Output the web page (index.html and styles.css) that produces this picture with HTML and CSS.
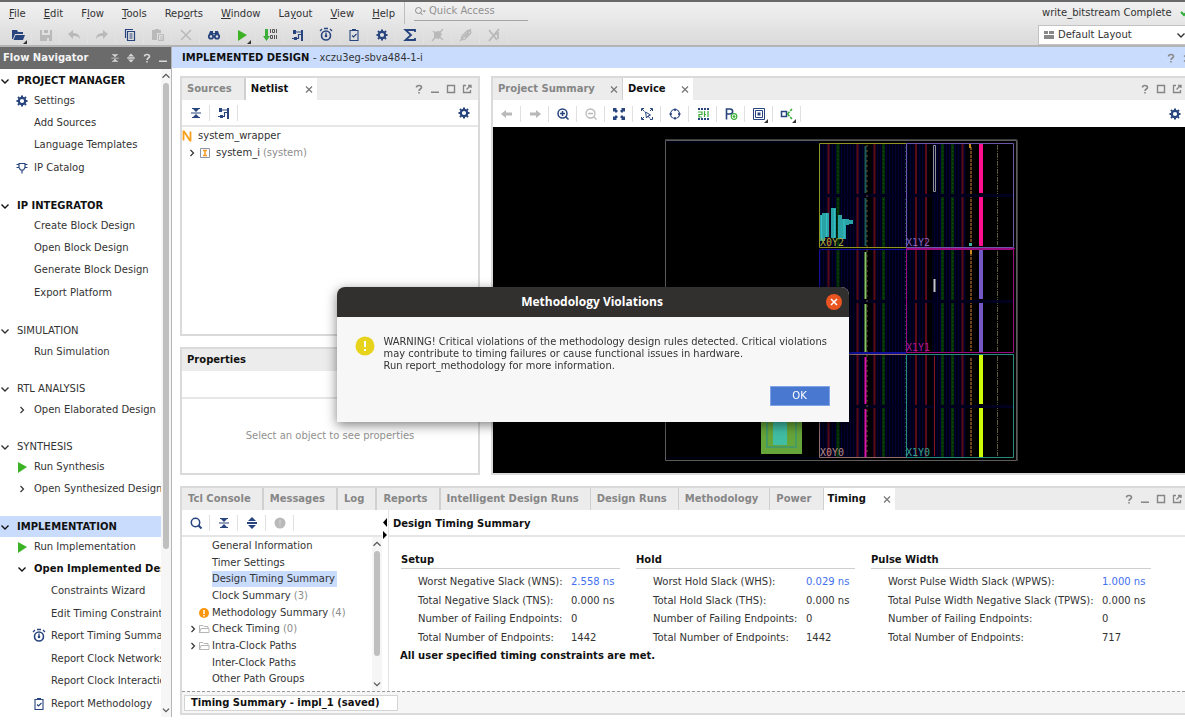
FILE: index.html
```
<!DOCTYPE html>
<html lang="en">
  <head>
    <meta charset="utf-8">
    <title>Implemented Design</title>
    <link rel="stylesheet" href="styles.css">
  </head>
  <body>
    <!-- icon set -->
    <svg class="sprite" aria-hidden="true">
      <symbol id="i-open" viewBox="0 0 16 16"><path fill="currentColor" d="M2 3h5l1 2h5v2H5l-2 5H2zM5.500 8H15l-2 5H3.500z"/></symbol>
      <symbol id="i-save" viewBox="0 0 16 16"><path fill="currentColor" d="M2 3h2v5h8V3h2v11h-3v-3H9v3H2zM6 3h4v3H6z"/></symbol>
      <symbol id="i-undo" viewBox="0 0 16 16"><path fill="currentColor" d="M2 7l5-4v3c4 0 7 2 7 6-2-3-4-3-7-3v3z"/></symbol>
      <symbol id="i-redo" viewBox="0 0 16 16"><path fill="currentColor" d="M14 7L9 3v3c-4 0-7 2-7 6 2-3 4-3 7-3v3z"/></symbol>
      <symbol id="i-copy" viewBox="0 0 16 16"><path fill="none" stroke="currentColor" stroke-width="1.200" d="M5.500 4.500h7v9h-7zM3.500 11V2.500H11M7.500 7h3M7.500 9h3M7.500 11h3"/></symbol>
      <symbol id="i-paste" viewBox="0 0 16 16"><path fill="currentColor" d="M2 3h3V2h4v1h2v3H7v7H2z"/><path fill="none" stroke="currentColor" d="M8.500 7.500h5v6h-5zM10 10h3M10 12h3"/></symbol>
      <symbol id="i-cross" viewBox="0 0 16 16"><path fill="none" stroke="currentColor" stroke-width="1.500" d="M3 3l10 10M13 3L3 13"/></symbol>
      <symbol id="i-find" viewBox="0 0 16 16"><path fill="currentColor" d="M4 4h3v2h2V4h3l1 3H3z"/><circle cx="5" cy="9.500" r="2.200" fill="none" stroke="currentColor" stroke-width="1.800"/><circle cx="11" cy="9.500" r="2.200" fill="none" stroke="currentColor" stroke-width="1.800"/></symbol>
      <symbol id="i-play" viewBox="0 0 16 16"><path fill="#3cb324" d="M4 3l9 5-9 6z"/></symbol>
      <symbol id="i-bits" viewBox="0 0 16 16"><path fill="#3cae3a" d="M3 2h3v7h2l-3.500 5L1 9h2z"/><path fill="none" stroke="#555" d="M8.500 2v4M10.500 2.500h2v3h-2zM14.500 2v4M8.500 8.500h2v3h-2zM12.500 8v4M14.500 8v4"/></symbol>
      <symbol id="i-net" viewBox="0 0 16 16"><path fill="currentColor" d="M3 3h3v4H3zM4 10h3v3H4zM11 3h2v11h-2z"/><path fill="none" stroke="currentColor" stroke-width="1.200" d="M2 11.500h3M6 5h6M6 11.500h2.500v-4H11"/></symbol>
      <symbol id="i-clock" viewBox="0 0 16 16"><circle cx="8" cy="8.500" r="4.500" fill="none" stroke="currentColor" stroke-width="1.600"/><path fill="none" stroke="currentColor" stroke-width="1.300" d="M8 5.500v3M6 1.500h4M2 4l2-2M14 4l-2-2"/><circle cx="8" cy="9" r="1.300" fill="currentColor"/></symbol>
      <symbol id="i-clip" viewBox="0 0 16 16"><path fill="none" stroke="currentColor" stroke-width="1.100" d="M4 3.500h8v10H4zM6 8.500l1.500 1.500L10.500 7"/><path fill="currentColor" d="M6 2h4v2H6z"/></symbol>
      <symbol id="i-gear" viewBox="0 0 16 16"><circle cx="8" cy="8" r="3.200" fill="none" stroke="currentColor" stroke-width="2.200"/><path stroke="currentColor" stroke-width="2" d="M8 2.500v2M8 11.500v2M2.500 8h2M11.500 8h2M4 4l1.200 1.200M10.800 10.800L12 12M12 4l-1.200 1.200M5.200 10.800L4 12"/></symbol>
      <symbol id="i-sigma" viewBox="0 0 16 16"><path fill="none" stroke="currentColor" stroke-width="1.800" d="M13 5V3H3.500L9 8l-5.500 5H13v-2"/></symbol>
      <symbol id="i-off1" viewBox="0 0 16 16"><path fill="currentColor" d="M4 5l5-1 3 3-3 5-5-1z"/><path stroke="currentColor" stroke-width="1.300" d="M2 14L13 2M3 4l10 9"/></symbol>
      <symbol id="i-off2" viewBox="0 0 16 16"><path fill="none" stroke="currentColor" stroke-width="1.400" d="M4 9l5-5c3-2 5 1 3 3l-5 5c-3 2-4-1-3-3zM2 14L13 2M7 10l4-4"/></symbol>
      <symbol id="i-off3" viewBox="0 0 16 16"><path fill="none" stroke="currentColor" stroke-width="1.800" d="M3 3l8 10M13 2L3 14M8 8l4-2v6"/></symbol>
      <symbol id="i-collapse" viewBox="0 0 16 16"><path fill="currentColor" d="M4 3h8v1H4zM5 4h6L8 7zM4 12h8v1H4zM5 12h6L8 9zM3 7.500h10v1H3z"/></symbol>
      <symbol id="i-expand" viewBox="0 0 16 16"><path fill="currentColor" d="M8 2l4 4H4zM8 14l4-4H4zM3 7h10v2H3z"/></symbol>
      <symbol id="i-help" viewBox="0 0 16 16"><path fill="none" stroke="currentColor" stroke-width="1.600" d="M5.500 6.500c0-2.700 5-2.700 5 0 0 1.500-2.500 1.500-2.500 3.500M8 11v1.500"/></symbol>
      <symbol id="i-min" viewBox="0 0 16 16"><path fill="currentColor" d="M4 10.500h8V12H4z"/></symbol>
      <symbol id="i-max" viewBox="0 0 16 16"><path fill="none" stroke="currentColor" stroke-width="1.400" d="M4.500 4.500h7v7h-7z"/></symbol>
      <symbol id="i-float" viewBox="0 0 16 16"><path fill="none" stroke="currentColor" stroke-width="1.300" d="M7 4.500H4.500v7h7V9M7.500 8.500l4-4M9 4.500h3V7"/></symbol>
      <symbol id="i-x" viewBox="0 0 16 16"><path fill="none" stroke="currentColor" stroke-width="1.200" d="M5 5.500l6 6M11 5.500l-6 6"/></symbol>
      <symbol id="i-close" viewBox="0 0 16 16"><path fill="none" stroke="currentColor" stroke-width="1.500" d="M5 5l6 6M11 5l-6 6"/></symbol>
      <symbol id="i-down" viewBox="0 0 16 16"><path fill="none" stroke="currentColor" stroke-width="1.400" d="M4.500 6.500L8 10l3.500-3.500"/></symbol>
      <symbol id="i-up" viewBox="0 0 16 16"><path fill="none" stroke="currentColor" stroke-width="1.400" d="M4 10l4-4 4 4"/></symbol>
      <symbol id="i-right" viewBox="0 0 16 16"><path fill="none" stroke="currentColor" stroke-width="1.200" d="M6.500 5l3 3-3 3"/></symbol>
      <symbol id="i-chip" viewBox="0 0 16 16"><path fill="none" stroke="currentColor" stroke-width="1.200" d="M5 3.500h6v4L9.500 10h-3L5 7.500zM2.500 4.500H5M2.500 7.500H5M11 4.500h2.500M11 7.500h2.500M8 10v3.500"/></symbol>
      <symbol id="i-search" viewBox="0 0 16 16"><circle cx="7.500" cy="7.500" r="4.200" fill="none" stroke="currentColor" stroke-width="1.500"/><path stroke="currentColor" stroke-width="2" d="M10.500 10.500l3 3"/></symbol>
      <symbol id="i-quick" viewBox="0 0 12 12"><circle cx="4.500" cy="5.500" r="3" fill="none" stroke="currentColor"/><path stroke="currentColor" d="M6.500 7.500l2 2.500"/><path fill="currentColor" d="M8.500 5.500H12L10.200 7.500z"/></symbol>
      <symbol id="i-zoomin" viewBox="0 0 16 16"><circle cx="7.500" cy="7.500" r="4.500" fill="none" stroke="currentColor" stroke-width="1.500"/><path stroke="currentColor" stroke-width="1.600" d="M10.500 10.500l3 3M5 7.500h5M7.500 5v5"/></symbol>
      <symbol id="i-zoomout" viewBox="0 0 16 16"><circle cx="7.500" cy="7.500" r="4.500" fill="none" stroke="currentColor" stroke-width="1.300"/><path stroke="currentColor" stroke-width="1.300" d="M10.500 10.500l3 3M5 7.500h5"/></symbol>
      <symbol id="i-left" viewBox="0 0 16 16"><path fill="currentColor" d="M2 8l5-4v2.500h6v3H7V12z"/></symbol>
      <symbol id="i-next" viewBox="0 0 16 16"><path fill="currentColor" d="M14 8L9 4v2.500H3v3h6V12z"/></symbol>
      <symbol id="i-fit" viewBox="0 0 16 16"><path fill="currentColor" d="M2 2h4L5 3l2 2-2 2-2-2-1 1zM14 2v4l-1-1-2 2-2-2 2-2-1-1zM2 14v-4l1 1 2-2 2 2-2 2 1 1zM14 14h-4l1-1-2-2 2-2 2 2 1-1z"/></symbol>
      <symbol id="i-fitsel" viewBox="0 0 16 16"><path fill="none" stroke="currentColor" d="M2.500 5V2.500H5M11 2.500h2.500V5M2.500 11v2.500H5M13.500 11v2.500H11M3 3l2.500 2.500M13 3l-2 2M3 13l2-2M6.500 6l1 6 1.500-2 2 2.500M6.500 6l5 3-2.500 1"/></symbol>
      <symbol id="i-target" viewBox="0 0 16 16"><circle cx="8" cy="8" r="4.500" fill="none" stroke="currentColor" stroke-width="1.200"/><path stroke="currentColor" stroke-width="1.600" d="M8 2.500V5M8 11v2.500M2.500 8H5M11 8h2.500"/></symbol>
      <symbol id="i-route" viewBox="0 0 16 16"><path stroke="currentColor" stroke-width="2" stroke-dasharray="2 1" d="M3 3h11M3 13h11"/><path fill="none" stroke="#3cae3a" stroke-width="1.200" d="M3 6h4v2.500H4v2.500h3M9.500 5v6M9 8.500h2M13 5v6"/></symbol>
      <symbol id="i-pblock" viewBox="0 0 16 16"><path fill="none" stroke="currentColor" stroke-width="1.600" d="M3.500 13.500V3H7c3.500 0 3.500 5 0 5H4"/><circle cx="11" cy="10.500" r="2.800" fill="#fff" stroke="#3cae3a" stroke-width="1.200"/><path stroke="#3cae3a" stroke-width="1.200" d="M11 9v3M9.500 10.500h3"/></symbol>
      <symbol id="i-frame" viewBox="0 0 16 16"><path fill="none" stroke="currentColor" d="M2.500 2.500h11v11h-11zM4.500 4.500h7v7h-7z"/><path fill="currentColor" d="M6.500 6.500h3v3h-3z"/></symbol>
      <symbol id="i-ports" viewBox="0 0 16 16"><path fill="none" stroke="currentColor" stroke-width="1.500" d="M2.500 5.500h5v5h-5z"/><path fill="none" stroke="#3cae3a" stroke-width="1.600" stroke-dasharray="3 1" d="M8.500 8l4.500-5M8.500 8l4.500 5"/></symbol>
      <symbol id="i-info" viewBox="0 0 16 16"><circle cx="8" cy="8" r="5.500" fill="currentColor"/><path stroke="#fff" stroke-opacity=".3" stroke-width="1.500" d="M8 5v4M8 10v1.500"/></symbol>
      <symbol id="i-warn" viewBox="0 0 16 16"><circle cx="8" cy="8" r="5" fill="#f9960e"/><path stroke="#fff" stroke-width="1.500" d="M8 5v4M8 10v1.500"/></symbol>
      <symbol id="i-folder" viewBox="0 0 16 16"><path fill="none" stroke="#b5b5b5" d="M3.500 12V4.500H7l1 1h4V7M3.500 11.500l1.500-4h8v4z"/></symbol>
      <symbol id="i-inst" viewBox="0 0 16 16"><path fill="#fff" stroke="#8e95a6" d="M3.500 3.500h9v9h-9z"/><path fill="none" stroke="#f59c22" stroke-width="1.500" d="M6 5.500h4M6 10.500h4M8 5v6"/></symbol>
      <symbol id="i-n" viewBox="0 0 16 16"><path fill="none" stroke="#f9a01b" stroke-width="1.800" d="M4.500 12.500v-9h.5l6 9h.5v-9"/></symbol>
      <symbol id="i-layout" viewBox="0 0 16 16"><path fill="#888" d="M3 4h4v3H3zM8 4h5v3H8zM3 8h10v4H3z"/></symbol>
      <symbol id="i-check" viewBox="0 0 16 16"><path fill="none" stroke="#2fae37" stroke-width="2" d="M1 7l3 3 8-8"/></symbol>
    </svg>

    <header class="topbar">
      <div class="topbar-left">
        <div class="menu-row">
          <nav class="menu">
            <button><u>F</u>ile</button>
            <button><u>E</u>dit</button>
            <button>F<u>l</u>ow</button>
            <button><u>T</u>ools</button>
            <button>Rep<u>o</u>rts</button>
            <button><u>W</u>indow</button>
            <button>La<u>y</u>out</button>
            <button><u>V</u>iew</button>
            <button><u>H</u>elp</button>
          </nav>
          <label class="quick">
            <svg class="icon"><use href="#i-quick"/></svg>
            <input type="text" placeholder="Quick Access" aria-label="Quick Access">
          </label>
        </div>
        <div class="tools main-tools">
          <button class="more" aria-label="Open"><svg class="icon"><use href="#i-open"/></svg></button>
          <button disabled aria-label="Save"><svg class="icon"><use href="#i-save"/></svg></button>
          <button disabled aria-label="Undo"><svg class="icon"><use href="#i-undo"/></svg></button>
          <button disabled aria-label="Redo"><svg class="icon"><use href="#i-redo"/></svg></button>
          <button aria-label="Copy"><svg class="icon"><use href="#i-copy"/></svg></button>
          <button disabled aria-label="Paste"><svg class="icon"><use href="#i-paste"/></svg></button>
          <button disabled aria-label="Delete"><svg class="icon"><use href="#i-cross"/></svg></button>
          <button aria-label="Find"><svg class="icon"><use href="#i-find"/></svg></button>
          <button class="more" aria-label="Run"><svg class="icon"><use href="#i-play"/></svg></button>
          <button aria-label="Generate bitstream"><svg class="icon"><use href="#i-bits"/></svg></button>
          <button aria-label="Schematic"><svg class="icon"><use href="#i-net"/></svg></button>
          <button aria-label="Timing"><svg class="icon"><use href="#i-clock"/></svg></button>
          <button aria-label="Methodology"><svg class="icon"><use href="#i-clip"/></svg></button>
          <button aria-label="Settings"><svg class="icon"><use href="#i-gear"/></svg></button>
          <button aria-label="Summary"><svg class="icon"><use href="#i-sigma"/></svg></button>
          <button disabled aria-label="Unmark"><svg class="icon"><use href="#i-off1"/></svg></button>
          <button disabled aria-label="Unlink"><svg class="icon"><use href="#i-off2"/></svg></button>
          <button disabled aria-label="Unroute"><svg class="icon"><use href="#i-off3"/></svg></button>
        </div>
      </div>
      <div class="topbar-right">
        <div class="status">write_bitstream Complete <svg class="icon"><use href="#i-check"/></svg></div>
        <div class="layout-pick">
          <svg class="icon"><use href="#i-layout"/></svg>
          <select aria-label="Layout"><option>Default Layout</option></select>
          <svg class="icon"><use href="#i-down"/></svg>
        </div>
      </div>
    </header>

    <div class="main">
      <aside class="flow">
        <div class="flow-title">
          <h2>Flow Navigator</h2>
          <button aria-label="Collapse all"><svg class="icon small"><use href="#i-collapse"/></svg></button>
          <button aria-label="Expand all"><svg class="icon small"><use href="#i-expand"/></svg></button>
          <button aria-label="Help"><svg class="icon"><use href="#i-help"/></svg></button>
          <button aria-label="Minimize"><svg class="icon"><use href="#i-min"/></svg></button>
        </div>
        <div class="flow-body">
          <nav class="flow-list">
            <section>
              <h3 class="strong"><svg class="icon"><use href="#i-down"/></svg>PROJECT MANAGER</h3>
              <ul>
                <li><svg class="icon navy"><use href="#i-gear"/></svg><a href="#">Settings</a></li>
                <li><a href="#">Add Sources</a></li>
                <li><a href="#">Language Templates</a></li>
                <li><svg class="icon navy"><use href="#i-chip"/></svg><a href="#">IP Catalog</a></li>
              </ul>
            </section>
            <section>
              <h3 class="strong"><svg class="icon"><use href="#i-down"/></svg>IP INTEGRATOR</h3>
              <ul>
                <li><a href="#">Create Block Design</a></li>
                <li><a href="#">Open Block Design</a></li>
                <li><a href="#">Generate Block Design</a></li>
                <li><a href="#">Export Platform</a></li>
              </ul>
            </section>
            <section>
              <h3><svg class="icon"><use href="#i-down"/></svg>SIMULATION</h3>
              <ul>
                <li><a href="#">Run Simulation</a></li>
              </ul>
            </section>
            <section>
              <h3><svg class="icon"><use href="#i-down"/></svg>RTL ANALYSIS</h3>
              <ul>
                <li><svg class="icon"><use href="#i-right"/></svg><a href="#">Open Elaborated Design</a></li>
              </ul>
            </section>
            <section>
              <h3><svg class="icon"><use href="#i-down"/></svg>SYNTHESIS</h3>
              <ul>
                <li><svg class="icon"><use href="#i-play"/></svg><a href="#">Run Synthesis</a></li>
                <li><svg class="icon"><use href="#i-right"/></svg><a href="#">Open Synthesized Design</a></li>
              </ul>
            </section>
            <section>
              <h3 class="strong current"><svg class="icon"><use href="#i-down"/></svg>IMPLEMENTATION</h3>
              <ul>
                <li><svg class="icon"><use href="#i-play"/></svg><a href="#">Run Implementation</a></li>
                <li class="strong"><svg class="icon"><use href="#i-down"/></svg><a href="#">Open Implemented Design</a></li>
                <li class="sub"><a href="#">Constraints Wizard</a></li>
                <li class="sub"><a href="#">Edit Timing Constraints</a></li>
                <li class="sub"><svg class="icon navy"><use href="#i-clock"/></svg><a href="#">Report Timing Summary</a></li>
                <li class="sub"><a href="#">Report Clock Networks</a></li>
                <li class="sub"><a href="#">Report Clock Interaction</a></li>
                <li class="sub"><svg class="icon navy"><use href="#i-clip"/></svg><a href="#">Report Methodology</a></li>
              </ul>
            </section>
          </nav>
          <div class="scroll">
            <svg class="icon"><use href="#i-up"/></svg>
            <div class="track"><div class="thumb flow-thumb"></div></div>
            <svg class="icon"><use href="#i-down"/></svg>
          </div>
        </div>
      </aside>

      <main class="design">
        <div class="design-title">
          <h1>IMPLEMENTED DESIGN <span>- xczu3eg-sbva484-1-i</span></h1>
          <button aria-label="Help"><svg class="icon"><use href="#i-help"/></svg></button>
          <button aria-label="Close"><svg class="icon"><use href="#i-x"/></svg></button>
        </div>

        <div class="panels">
          <div class="upper">
            <div class="left-col">
              <section class="panel netlist">
                <div class="tabs">
                  <button class="tab">Sources</button>
                  <button class="tab active">Netlist <svg class="icon"><use href="#i-x"/></svg></button>
                  <div class="win">
                    <button aria-label="Help"><svg class="icon"><use href="#i-help"/></svg></button>
                    <button aria-label="Minimize"><svg class="icon"><use href="#i-min"/></svg></button>
                    <button aria-label="Maximize"><svg class="icon"><use href="#i-max"/></svg></button>
                    <button aria-label="Float"><svg class="icon"><use href="#i-float"/></svg></button>
                  </div>
                </div>
                <div class="tools">
                  <button aria-label="Collapse all"><svg class="icon"><use href="#i-collapse"/></svg></button>
                  <button aria-label="Schematic"><svg class="icon"><use href="#i-net"/></svg></button>
                  <button class="end" aria-label="Settings"><svg class="icon"><use href="#i-gear"/></svg></button>
                </div>
                <ul class="net-tree">
                  <li><svg class="icon"><use href="#i-n"/></svg>system_wrapper</li>
                  <li class="child"><svg class="icon"><use href="#i-right"/></svg><svg class="icon"><use href="#i-inst"/></svg>system_i <span>(system)</span></li>
                </ul>
              </section>
              <section class="panel props">
                <h2>Properties</h2>
                <div class="props-tools"></div>
                <p>Select an object to see properties</p>
              </section>
            </div>

            <section class="panel device open-right">
              <div class="tabs">
                <button class="tab closable">Project Summary <svg class="icon"><use href="#i-x"/></svg></button>
                <button class="tab active">Device <svg class="icon"><use href="#i-x"/></svg></button>
                <div class="win">
                  <button aria-label="Help"><svg class="icon"><use href="#i-help"/></svg></button>
                  <button aria-label="Maximize"><svg class="icon"><use href="#i-max"/></svg></button>
                  <button aria-label="Float"><svg class="icon"><use href="#i-float"/></svg></button>
                </div>
              </div>
              <div class="tools">
                <button disabled aria-label="Back"><svg class="icon"><use href="#i-left"/></svg></button>
                <button disabled aria-label="Forward"><svg class="icon"><use href="#i-next"/></svg></button>
                <button aria-label="Zoom in"><svg class="icon"><use href="#i-zoomin"/></svg></button>
                <button disabled aria-label="Zoom out"><svg class="icon"><use href="#i-zoomout"/></svg></button>
                <button aria-label="Zoom fit"><svg class="icon"><use href="#i-fit"/></svg></button>
                <button aria-label="Fit selection"><svg class="icon"><use href="#i-fitsel"/></svg></button>
                <button aria-label="Auto fit"><svg class="icon"><use href="#i-target"/></svg></button>
                <button aria-label="Routing"><svg class="icon"><use href="#i-route"/></svg></button>
                <button aria-label="Draw pblock"><svg class="icon"><use href="#i-pblock"/></svg></button>
                <button class="more" aria-label="Cells"><svg class="icon"><use href="#i-frame"/></svg></button>
                <button class="more" aria-label="Ports"><svg class="icon"><use href="#i-ports"/></svg></button>
                <button class="end" aria-label="Settings"><svg class="icon"><use href="#i-gear"/></svg></button>
              </div>
              <div class="canvas">
                <svg viewBox="493 127 692 346" role="img" aria-label="Device floorplan">
                  <defs>
                    <pattern id="cols" width="6" height="4" patternUnits="userSpaceOnUse">
                      <path fill="#000014" d="M0 0h6v4H0z"/>
                      <path fill="#000034" d="M1 0h1v4H1zM4 0h1v4H4z"/>
                    </pattern>
                    <!-- one row of clock regions, 104 high -->
                    <g id="row">
                      <path fill="url(#cols)" d="M820 0h146v104H820z"/>
                      <path fill="#000" d="M864 0h8v104h-8zM928 0h4v104h-4z"/>
                      <path stroke="#5c0a14" stroke-width="2" d="M828.500 0v104M857.500 0v104M874.500 0v104M916 0v104M926 0v104M962.500 0v104"/>
                      <path stroke="#033006" stroke-width="3" d="M838 0v104M883.500 0v104M942.500 0v104M952.500 0v104"/>
                      <path stroke="#0a5a12" stroke-dasharray="1 3" d="M838 0v104M883.500 0v104M905.500 0v104M942.500 0v104M952.500 0v104"/>
                      <path stroke="#6e4212" stroke-width="2" stroke-dasharray="3 1" d="M971 4v98"/>
                      <path stroke="#5e5636" stroke-dasharray="5 1 1 1" d="M997.500 2v100"/>
                      <path stroke="#00001e" stroke-width="3" d="M820 52.500h194"/>
                    </g>
                    <path id="bar" stroke-width="4" d="M981 1v49M981 54v49"/>
                    <path id="thin" stroke-width="2" d="M865.500 3v47M865.500 55v48"/>
                  </defs>
                  <path fill="none" stroke="#5c5c5c" d="M665.500 140.500h351v320h-351z"/>
                  <path stroke="#3c3c3c" d="M1017.500 140v321M665 139.500h352"/>
                  <path stroke="#00002a" d="M667 142h152M667 458h152"/>
                  <use href="#row" y="143"/>
                  <use href="#row" y="249"/>
                  <use href="#row" y="354"/>
                  <use href="#bar" y="143" stroke="#ff0e8e"/>
                  <use href="#bar" y="249" stroke="#7458c6"/>
                  <use href="#bar" y="354" stroke="#ccfb08"/>
                  <use href="#thin" y="143" stroke="#1c5a62"/>
                  <use href="#thin" y="249" stroke="#83c468"/>
                  <use href="#thin" y="354" stroke="#e012b4"/>
                  <path stroke="#6d5a2a" stroke-dasharray="2 3" d="M867 145v310"/>
                  <path fill="none" stroke="#909090" d="M933.500 145.500h2v46h-2z"/>
                  <path stroke="#c4c4c4" stroke-width="2" d="M934.500 279v13"/>
                  <path stroke="#8a1620" d="M934.500 356v100"/>
                  <path stroke="#c98a1e" stroke-width="2" d="M970 144v4M971 249v5"/>
                  <path fill="#3fb5a0" d="M969 243h3v3h-3z"/>
                  <path fill="#2aa3a6" d="M820 215h2v-2h7v24h-4v4h-5zM831 208h5v30h-5zM838 215h4v4h7v1h4v4h-4v1h-3v14h-8z"/>
                  <path stroke="#35c0c4" d="M821.500 215v25M826.500 213v24M834.500 209v29M844 219v20"/>
                  <g fill="none">
                    <path stroke="#10109a" d="M819.500 249.500h87v103h-87zM820 353.500h86"/>
                    <path stroke="#8f951f" d="M819.500 143.500h87v104h-87z"/>
                    <path stroke="#6c56aa" d="M906.500 143.500h107v104h-107z"/>
                    <path stroke="#9c0a80" d="M906.500 249.500h107v103h-107zM906 248.500h109"/>
                    <path stroke="#8e6c68" d="M819.500 354.500h87v103h-87z"/>
                    <path stroke="#258b7c" d="M906.500 354.500h107v103h-107z"/>
                  </g>
                  <g class="region">
                    <text x="820" y="246" fill="#a9ad30">X0Y2</text>
                    <text x="906" y="246" fill="#8466bd">X1Y2</text>
                    <text x="906" y="351" fill="#b01693">X1Y1</text>
                    <text x="820" y="456" fill="#b88a84">X0Y0</text>
                    <text x="906" y="456" fill="#35a290">X1Y0</text>
                  </g>
                  <path fill="#66a539" d="M761 380h41v74h-41z"/>
                  <path fill="none" stroke="#479a62" stroke-width="2" d="M767 380h29v67h-29z"/>
                  <path fill="#41bda4" d="M773 380h14v65h-14z"/>
                </svg>
              </div>
            </section>
          </div>

          <section class="panel timing open-right">
            <div class="tabs">
              <button class="tab">Tcl Console</button>
              <button class="tab">Messages</button>
              <button class="tab">Log</button>
              <button class="tab">Reports</button>
              <button class="tab">Intelligent Design Runs</button>
              <button class="tab">Design Runs</button>
              <button class="tab">Methodology</button>
              <button class="tab">Power</button>
              <button class="tab active">Timing <svg class="icon"><use href="#i-x"/></svg></button>
              <div class="win">
                <button aria-label="Help"><svg class="icon"><use href="#i-help"/></svg></button>
                <button aria-label="Minimize"><svg class="icon"><use href="#i-min"/></svg></button>
                <button aria-label="Maximize"><svg class="icon"><use href="#i-max"/></svg></button>
                <button aria-label="Float"><svg class="icon"><use href="#i-float"/></svg></button>
              </div>
            </div>
            <div class="timing-body">
              <div class="timing-nav">
                <div class="tools">
                  <button aria-label="Search"><svg class="icon"><use href="#i-search"/></svg></button>
                  <button aria-label="Collapse all"><svg class="icon"><use href="#i-collapse"/></svg></button>
                  <button aria-label="Expand all"><svg class="icon"><use href="#i-expand"/></svg></button>
                  <button disabled aria-label="Show failing"><svg class="icon"><use href="#i-info"/></svg></button>
                </div>
                <div class="timing-tree">
                  <ul>
                    <li><a href="#">General Information</a></li>
                    <li><a href="#">Timer Settings</a></li>
                    <li><a href="#" class="selected">Design Timing Summary</a></li>
                    <li><a href="#">Clock Summary <span>(3)</span></a></li>
                    <li><svg class="icon"><use href="#i-warn"/></svg><a href="#">Methodology Summary <span>(4)</span></a></li>
                    <li><svg class="icon arrow"><use href="#i-right"/></svg><svg class="icon"><use href="#i-folder"/></svg><a href="#">Check Timing <span>(0)</span></a></li>
                    <li><svg class="icon arrow"><use href="#i-right"/></svg><svg class="icon"><use href="#i-folder"/></svg><a href="#">Intra-Clock Paths</a></li>
                    <li><a href="#">Inter-Clock Paths</a></li>
                    <li><a href="#">Other Path Groups</a></li>
                  </ul>
                  <div class="scroll">
                    <svg class="icon"><use href="#i-up"/></svg>
                    <div class="track"><div class="thumb tree-thumb"></div></div>
                    <svg class="icon"><use href="#i-down"/></svg>
                  </div>
                </div>
              </div>
              <div class="splitter">
                <svg width="6" height="22" viewBox="0 0 6 22"><path d="M5 0v9L1 4.500zM1 13v8l4-4z"/></svg>
              </div>
              <div class="timing-report">
                <h2>Design Timing Summary</h2>
                <div class="summary">
                  <table>
                    <caption>Setup</caption>
                    <tr><th>Worst Negative Slack (WNS):</th><td><a href="#">2.558 ns</a></td></tr>
                    <tr><th>Total Negative Slack (TNS):</th><td>0.000 ns</td></tr>
                    <tr><th>Number of Failing Endpoints:</th><td>0</td></tr>
                    <tr><th>Total Number of Endpoints:</th><td>1442</td></tr>
                  </table>
                  <table>
                    <caption>Hold</caption>
                    <tr><th>Worst Hold Slack (WHS):</th><td><a href="#">0.029 ns</a></td></tr>
                    <tr><th>Total Hold Slack (THS):</th><td>0.000 ns</td></tr>
                    <tr><th>Number of Failing Endpoints:</th><td>0</td></tr>
                    <tr><th>Total Number of Endpoints:</th><td>1442</td></tr>
                  </table>
                  <table class="wide">
                    <caption>Pulse Width</caption>
                    <tr><th>Worst Pulse Width Slack (WPWS):</th><td><a href="#">1.000 ns</a></td></tr>
                    <tr><th>Total Pulse Width Negative Slack (TPWS):</th><td>0.000 ns</td></tr>
                    <tr><th>Number of Failing Endpoints:</th><td>0</td></tr>
                    <tr><th>Total Number of Endpoints:</th><td>717</td></tr>
                  </table>
                </div>
                <p>All user specified timing constraints are met.</p>
              </div>
            </div>
            <div class="timing-foot"><button>Timing Summary - impl_1 (saved)</button></div>
          </section>
        </div>
      </main>
    </div>

    <div class="overlay">
      <div class="dialog" role="dialog" aria-labelledby="dlg-title">
        <div class="dialog-head">
          <h2 id="dlg-title">Methodology Violations</h2>
          <button class="dialog-close" aria-label="Close"><svg class="icon"><use href="#i-close"/></svg></button>
        </div>
        <div class="dialog-body">
          <svg class="alert" viewBox="0 0 20 20"><circle cx="10" cy="10" r="9.500" fill="#e8d31c"/><path stroke="#fff" stroke-width="2" d="M10 5v6M10 13v2"/></svg>
          <p>WARNING! Critical violations of the methodology design rules detected. Critical violations<br>may contribute to timing failures or cause functional issues in hardware.<br>Run report_methodology for more information.</p>
          <button class="ok">OK</button>
        </div>
      </div>
    </div>
  </body>
</html>
```
FILE: styles.css
```
* {
  box-sizing: border-box;
}
body {
  margin: 0;
  height: 100vh;
  display: flex;
  flex-direction: column;
  overflow: hidden;
  background: #fff;
  color: #333;
  font: 10px/16px "DejaVu Sans", sans-serif;
  white-space: nowrap;
}
h1, h2, h3, p, ul {
  margin: 0;
  padding: 0;
  font-size: inherit;
}
ul {
  list-style: none;
}
button, input, select {
  font: inherit;
  color: inherit;
  border: 0;
  padding: 0;
  margin: 0;
  background: none;
}
a {
  color: inherit;
  text-decoration: none;
}
.sprite {
  position: absolute;
  width: 0;
  height: 0;
}
.icon {
  width: 16px;
  height: 16px;
  flex: none;
  display: block;
}
.icon.small {
  width: 12px;
  height: 12px;
}
.navy {
  color: #27447e;
}

/* top bar */
.topbar {
  flex: none;
  display: flex;
  justify-content: space-between;
  height: 47px;
  border-top: 2px solid #6b6868;
  border-bottom: 2px solid #b4b4b4;
  background: linear-gradient(#f1f1f1, #dadada);
}
.menu-row {
  display: flex;
  height: 22px;
}
.menu {
  display: flex;
  align-items: center;
  gap: 18px;
  width: 405px;
  padding: 2px 0 0 9px;
  border-right: 1px solid #bdbdbd;
}
.quick {
  display: flex;
  align-items: center;
  width: 114px;
  height: 19px;
  margin-left: 9px;
  border-bottom: 1px solid #a5a5a5;
  color: #8a8a8a;
}
.quick .icon {
  width: 12px;
  height: 12px;
  margin-right: 3px;
}
.quick input {
  width: 90px;
  outline: 0;
}
.quick input::placeholder {
  color: #929292;
}
.tools {
  display: flex;
  align-items: center;
  color: #27447e;
}
.tools button {
  position: relative;
  display: flex;
  justify-content: center;
  width: 28px;
  border-right: 1px solid #e0e0e0;
}
.tools button:disabled {
  color: #b9b9b9;
}
.tools .more::after {
  content: "";
  position: absolute;
  right: 4px;
  bottom: -1px;
  border: 2px solid #333;
  border-top-color: transparent;
  border-left-color: transparent;
}
.tools .end {
  margin-left: auto;
  border-right: 0;
}
.main-tools {
  padding: 3px 0 0 4px;
}
.main-tools button {
  border-color: #e2e2e2;
}
.topbar-right {
  width: 147px;
}
.status {
  display: flex;
  align-items: center;
  gap: 8px;
  height: 22px;
  padding-left: 4px;
  overflow: hidden;
}
.layout-pick {
  display: flex;
  align-items: center;
  height: 20px;
  margin-top: 1px;
  padding-left: 2px;
  border: 1px solid #c2c2c2;
  border-right: 0;
  background: #fff;
  overflow: hidden;
}
.layout-pick select {
  flex: 1;
  margin-left: 1px;
  appearance: none;
}
.layout-pick .icon:last-child {
  margin-right: -4px;
}

/* flow navigator */
.main {
  flex: 1;
  display: flex;
  min-height: 0;
  padding-bottom: 3px;
}
.flow {
  flex: none;
  display: flex;
  flex-direction: column;
  width: 172px;
  border-right: 1px solid #b5b5b5;
}
.flow-title {
  flex: none;
  display: flex;
  align-items: center;
  height: 22px;
  padding-left: 3px;
  background: #6b6b6b;
  color: #f4f4f4;
}
.flow-title h2 {
  flex: 1;
}
.flow-title button {
  display: flex;
  justify-content: center;
  width: 16px;
  color: #d8d8d8;
}
.flow-body {
  flex: 1;
  display: flex;
  min-height: 0;
}
.flow-list {
  flex: 1;
  overflow: hidden;
  padding-top: 1px;
}
.flow-list section {
  margin-bottom: 16px;
}
.flow-list h3 {
  display: flex;
  align-items: center;
  height: 21px;
  font-weight: normal;
}
.flow-list h3 .icon {
  margin: 0 4px 0 -3px;
}
.flow-list .strong {
  font-weight: bold;
  color: #111;
}
.flow-list .current {
  background: #c9dcfd;
}
.flow-list li {
  display: flex;
  align-items: center;
  height: 22px;
  padding-left: 34px;
}
.flow-list li:nth-child(even) {
  height: 23px;
}
.flow-list li:first-child {
  height: 20px;
}
.flow-list li:only-child {
  height: 21px;
}
.flow-list li.sub {
  padding-left: 51px;
}
.flow-list li .icon {
  margin: 0 4px 0 -20px;
}
.scroll {
  flex: none;
  display: flex;
  flex-direction: column;
  align-items: center;
  width: 10px;
  background: #f6f6f6;
  color: #555;
}
.scroll .icon {
  height: 14px;
}
.track {
  flex: 1;
}
.thumb {
  width: 6px;
  border-radius: 3px;
  background: #bfbfbf;
}
.flow-thumb {
  height: 466px;
}
.tree-thumb {
  height: 105px;
}

/* design area */
.design {
  flex: 1;
  display: flex;
  flex-direction: column;
  min-width: 0;
}
.design-title {
  flex: none;
  display: flex;
  align-items: center;
  height: 21px;
  padding-left: 10px;
  background: #c9dcfd;
  overflow: hidden;
}
.design-title h1 {
  flex: 1;
  color: #111;
}
.design-title span {
  font: 11px "DejaVu Sans Condensed", "DejaVu Sans", sans-serif;
  color: #333;
}
.design-title button {
  color: #8a8a8a;
}
.design-title button:last-child {
  margin-right: -10px;
}
.panels {
  flex: 1;
  display: flex;
  flex-direction: column;
  gap: 11px;
  min-height: 0;
  padding: 8px 0 2px 8px;
}
.upper {
  flex: 1;
  display: flex;
  gap: 11px;
  min-height: 0;
}
.left-col {
  flex: none;
  display: flex;
  flex-direction: column;
  gap: 11px;
  width: 300px;
}
.panel {
  display: flex;
  flex-direction: column;
  border: 2px solid #dadada;
  background: #fff;
}
.open-right {
  border-right: 0;
}
.netlist {
  flex: 1;
}
.device {
  flex: 1;
  min-width: 0;
}
.tabs {
  flex: none;
  display: flex;
  height: 22px;
  background: #ececec;
}
.tab {
  display: flex;
  align-items: center;
  padding: 0 12px 0 5px;
  border-right: 2px solid #d0d0d0;
  color: #868686;
  font-weight: bold;
}
.tab.closable {
  padding-right: 0;
  border-width: 1px;
}
.tab .icon {
  margin-left: 13px;
  color: #777;
}
.device .tab .icon {
  margin-left: 11px;
}
.tab.active {
  padding-right: 0;
  border: 0;
  background: #fff;
  color: #111;
}
.timing .tab {
  padding-left: 6px;
  padding-right: 11px;
}
.timing .tab.active {
  padding: 0 0 0 4px;
}
.timing .tab:nth-child(n+5) {
  border-width: 1px;
}
.win {
  display: flex;
  align-items: center;
  margin-left: auto;
  color: #858585;
}
.netlist .win {
  padding-right: 3px;
}
.panel .tools {
  flex: none;
  height: 27px;
  border-bottom: 2px solid #e6e6e6;
}
.device .tools {
  border-bottom: 0;
}
.device .end {
  margin-right: -4px;
}
.net-tree li {
  display: flex;
  align-items: center;
  height: 17px;
}
.net-tree li .icon:first-child {
  margin: 0 3px 0 -3px;
}
.net-tree li.child .icon {
  margin: 0 3px 0 0;
}
.net-tree li.child {
  padding-left: 2px;
}
.net-tree li.child .icon:first-child {
  margin-right: -3px;
}
.net-tree span {
  margin-left: 3px;
}
.net-tree span, .timing-tree span {
  color: #8c8c8c;
}
.props {
  flex: none;
  height: 128px;
}
.props h2 {
  height: 22px;
  padding: 3px 5px;
  background: #ececec;
  color: #111;
}
.props-tools {
  height: 28px;
  border-bottom: 2px solid #e6e6e6;
}
.props p {
  padding-top: 29px;
  text-align: center;
  color: #929292;
}
.canvas {
  flex: 1;
  min-height: 0;
  background: #000;
}
.canvas svg {
  display: block;
  width: 100%;
  height: 100%;
}
.region {
  font: 10px "DejaVu Sans Mono", monospace;
}

/* timing panel */
.timing {
  flex: none;
}
.timing-body {
  display: flex;
}
.timing-nav {
  width: 200px;
}
.timing-tree {
  display: flex;
  justify-content: space-between;
  height: 154px;
}
.timing-tree li {
  display: flex;
  align-items: center;
  height: 17px;
  padding-left: 30px;
}
.timing-tree li:nth-child(3n) {
  height: 16px;
}
.timing-tree li .icon {
  margin: 0 0 0 -16px;
}
.timing-tree li .arrow {
  margin: 0 4px 0 -27px;
}
.timing-tree li .arrow + .icon {
  margin: 0 0 0 -9px;
}
.selected {
  padding-right: 2px;
  background: #c9dcfd;
}
.splitter {
  width: 7px;
  padding-top: 8px;
  border-right: 1px solid #e3e3e3;
}
.splitter svg {
  display: block;
}
.timing-report {
  flex: 1;
}
.timing-report h2 {
  height: 27px;
  padding: 6px 4px 0;
  border-bottom: 2px solid #e6e6e6;
  color: #111;
}
.summary {
  display: flex;
  gap: 16px;
  padding: 15px 0 0 12px;
}
.summary table {
  width: 219px;
  border-collapse: collapse;
  table-layout: fixed;
}
.summary .wide {
  width: 280px;
}
.summary caption {
  height: 17px;
  margin-bottom: 4px;
  border-bottom: 1px solid #cfcfcf;
  color: #111;
  font-weight: bold;
  text-align: left;
}
.summary th {
  width: 170px;
  height: 18px;
  padding: 0 0 0 17px;
  font-weight: normal;
  text-align: left;
}
.summary tr:nth-child(even) th {
  height: 19px;
}
.summary .wide th {
  width: 231px;
}
.summary td {
  padding: 0;
}
.summary td a {
  color: #4270f0;
}
.timing-report p {
  padding: 1px 11px 0;
  color: #111;
  font-weight: bold;
}
.timing-foot {
  height: 22px;
  padding: 3px 2px;
  border-top: 1px dashed #999;
  background: #f6f6f6;
}
.timing-foot button {
  display: block;
  width: 214px;
  padding-left: 6px;
  height: 16px;
  line-height: 14px;
  border: 1px solid #d4d4d4;
  background: #fff;
  color: #111;
  font-weight: bold;
  text-align: left;
}

/* message dialog */
.overlay {
  position: fixed;
  inset: 0;
  display: grid;
  place-items: center;
  padding-bottom: 12px;
}
.dialog {
  width: 512px;
  border-radius: 8px 8px 0 0;
  background: #f7f7f7;
  box-shadow: 0 3px 12px rgba(0, 0, 0, 0.5);
}
.dialog-head {
  display: flex;
  align-items: center;
  height: 30px;
  padding: 0 7px;
  border-radius: 8px 8px 0 0;
  background: #322f2f;
  color: #fff;
}
.dialog-head h2 {
  flex: 1;
  padding-left: 15px;
  font: bold 12px/20px "Open Sans", sans-serif;
  text-align: center;
}
.dialog-close {
  border-radius: 8px;
  background: #e95420;
}
.dialog-body {
  display: grid;
  grid-template-columns: 20px 1fr;
  column-gap: 9px;
  padding: 19px 19px 16px 18px;
}
.alert {
  width: 20px;
  height: 20px;
}
.dialog-body p {
  font: 11px/12px "DejaVu Sans Condensed", "DejaVu Sans", sans-serif;
}
.ok {
  grid-column: 2;
  justify-self: end;
  width: 60px;
  height: 20px;
  margin-top: 14px;
  border: 1px solid #7fa3e3;
  background: #4878cf;
  color: #fff;
}
```
